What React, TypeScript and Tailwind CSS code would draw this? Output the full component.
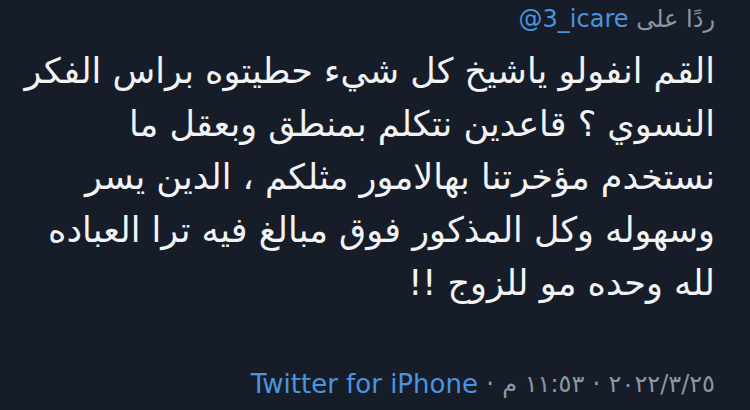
import React from 'react';

const lines = [
  'القم انفولو ياشيخ كل شيء حطيتوه براس الفكر',
  'النسوي ؟ قاعدين نتكلم بمنطق وبعقل ما',
  'نستخدم مؤخرتنا بهالامور مثلكم ، الدين يسر',
  'وسهوله وكل المذكور فوق مبالغ فيه ترا العباده',
  'لله وحده مو للزوج !!',
];

export default function App() {
  return (
    <div
      dir="rtl"
      className="w-[750px] h-[410px] overflow-hidden bg-[#161d28] text-[#f1f3f5] pr-[35px] pl-[16px] flex flex-col"
      style={{ fontFamily: '"DejaVu Sans", "Noto Sans", sans-serif' }}
    >
      {/* Reply header */}
      <div className="pt-[4px] text-[24px] leading-[30px] text-[#8b97a4]">
        ردًا على <span dir="ltr" className="text-[#4a94e0]">@3_icare</span>
      </div>

      {/* Tweet body */}
      <div className="mt-[11px] text-[35px] leading-[53px]">
        {lines.map((line, i) => (
          <div key={i} className="whitespace-nowrap">{line}</div>
        ))}
      </div>

      {/* Meta */}
      <div className="mt-auto mb-[9px] flex items-center gap-[8px] text-[26px] leading-[34px] text-[#8b97a4]">
        <span className="text-[24px]">٢٠٢٢/٣/٢٥</span>
        <span>·</span>
        <span className="text-[24px]">١١:٥٣ م</span>
        <span>·</span>
        <span dir="ltr" className="text-[#4a94e0]">Twitter for iPhone</span>
      </div>
    </div>
  );
}
